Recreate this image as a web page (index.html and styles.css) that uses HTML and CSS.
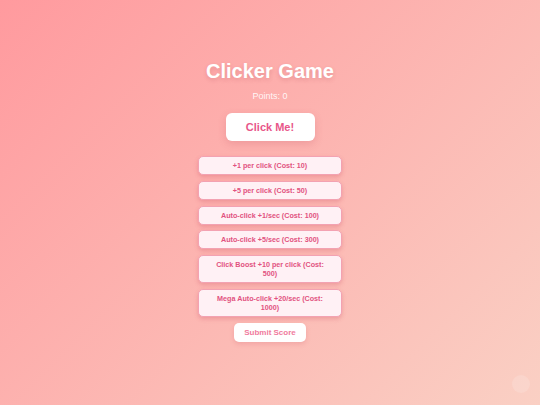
FILE: index.html
```html
<!DOCTYPE html>
<html>
<head>
<meta charset="utf-8">
<link rel="stylesheet" href="styles.css">
</head>
<body>
<main class="game">
  <h1 class="title">Clicker Game</h1>
  <p class="points">Points: 0</p>
  <button class="click-btn">Click Me!</button>
  <div class="upgrades">
    <button class="upgrade">+1 per click (Cost: 10)</button>
    <button class="upgrade">+5 per click (Cost: 50)</button>
    <button class="upgrade">Auto-click +1/sec (Cost: 100)</button>
    <button class="upgrade">Auto-click +5/sec (Cost: 300)</button>
    <button class="upgrade">Click Boost +10 per click (Cost: 500)</button>
    <button class="upgrade">Mega Auto-click +20/sec (Cost: 1000)</button>
    <button class="submit">Submit Score</button>
  </div>
</main>
<div class="bubble"></div>
</body>
</html>
```
FILE: styles.css
```css
html, body {
  margin: 0;
  padding: 0;
}
body {
  width: 540px;
  height: 405px;
  overflow: hidden;
  background: linear-gradient(135deg, #ff9a9e 0%, #fad0c4 100%);
  font-family: "Liberation Sans", Arial, sans-serif;
}
.game {
  display: flex;
  flex-direction: column;
  align-items: center;
  padding-top: 59px;
}
.title {
  margin: 0;
  font-size: 20px;
  line-height: 24px;
  font-weight: bold;
  color: #fff;
  text-shadow: 0 2px 4px rgba(150, 40, 60, 0.2);
}
.points {
  margin: 7px 0 0;
  font-size: 9px;
  line-height: 12px;
  color: rgba(255, 255, 255, 0.9);
}
.click-btn {
  margin-top: 11px;
  width: 89px;
  height: 28px;
  border: none;
  border-radius: 6px;
  background: #fff;
  color: #e8578a;
  font-family: inherit;
  font-size: 11px;
  font-weight: bold;
  box-shadow: 0 3px 8px rgba(180, 60, 80, 0.2);
  padding: 0;
}
.upgrades {
  margin-top: 15px;
  display: flex;
  flex-direction: column;
  align-items: center;
  gap: 5.75px;
}
.upgrade {
  box-sizing: border-box;
  width: 144px;
  min-height: 19px;
  padding: 4px 12px;
  border: 1px solid #f3a2b2;
  border-radius: 5px;
  background: #fff1f5;
  color: #e2527f;
  font-family: inherit;
  font-size: 7.2px;
  line-height: 9px;
  font-weight: bold;
  box-shadow: 0 2px 4px rgba(200, 70, 90, 0.28);
}
.submit {
  box-sizing: border-box;
  width: 72px;
  height: 19px;
  padding: 0;
  border: none;
  border-radius: 5px;
  background: #fff;
  color: #f07b9d;
  font-family: inherit;
  font-size: 8px;
  font-weight: bold;
  box-shadow: 0 2px 5px rgba(200, 70, 90, 0.2);
}
.bubble {
  position: fixed;
  left: 512px;
  top: 375px;
  width: 18px;
  height: 18px;
  border-radius: 50%;
  background: rgba(255, 255, 255, 0.15);
}
```
